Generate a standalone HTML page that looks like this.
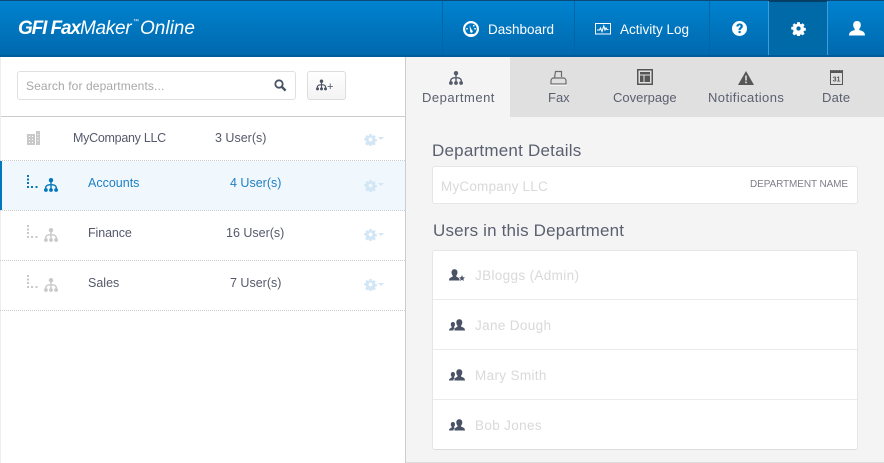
<!DOCTYPE html>
<html><head><meta charset="utf-8">
<style>
html,body{margin:0;padding:0;width:884px;height:463px;overflow:hidden;background:#fff;font-family:"Liberation Sans",sans-serif}
.a{position:absolute}
.t{position:absolute;white-space:nowrap;line-height:16px}
svg{position:absolute;display:block}
.n{font-size:13.5px;color:#d9d9d9;letter-spacing:.35px}
.tab{font-size:13px;color:#5b6070}
</style></head><body>
<svg width="0" height="0" style="position:absolute"><defs>
<symbol id="org" viewBox="0 0 14 14"><circle cx="7" cy="2.200" r="2.200"/><circle cx="1.900" cy="12" r="1.900"/><circle cx="7" cy="12" r="1.900"/><circle cx="12.100" cy="12" r="1.900"/><path d="M6.300 3h1.400v3.100c2.700 0 5.400.7 5.400 4.600h-1.400c0-2.800-1.700-3.200-4-3.200v3.200H6.300V7.500c-2.300 0-4 .4-4 3.200H.9c0-3.900 2.700-4.600 5.400-4.600z"/></symbol>
<symbol id="gear" viewBox="0 0 14 14"><path fill-rule="evenodd" d="M5.600 0h2.800l.3 2 1.200.5L11.600 1.300l2 2-1.200 1.700.5 1.200 2 .3v2.800l-2 .3-.5 1.200 1.200 1.700-2 2-1.700-1.200-1.200.5-.3 2H5.600l-.3-2-1.200-.5-1.700 1.200-2-2L1.600 9.600 1.100 8.400l-2-.3V5.300l2-.3.5-1.200L.4 3.300l2-2 1.700 1.200 1.200-.5zM7 4.700a2.300 2.300 0 1 0 0 4.600 2.300 2.300 0 0 0 0-4.600z" transform="translate(1 1) scale(.86)"/></symbol>
<symbol id="users" viewBox="0 0 16 12"><path d="M10.300.3c1.900 0 3 1.300 3 3.200 0 1.300-.6 2.400-1.200 3v1.100c1.500.7 3.900 1 3.900 3.900H5.400c0-1.900 1-2.700 2-3.200l1.100-.7V6.500c-.7-.6-1.200-1.700-1.200-3 0-1.900 1.100-3.200 3-3.200z"/><path d="M3.900 3c1.300 0 2.100 1 2.100 2.400 0 1-.4 1.800-.9 2.300v.9l.9.500C5 9.700 4.300 10.500 4.300 11.500H0c0-2 1.700-2.300 2.700-3V7.700c-.5-.5-.9-1.300-.9-2.300C1.800 4 2.600 3 3.900 3z"/></symbol>
<symbol id="dots" viewBox="0 0 11 14"><g><rect x="0" y="0" width="2" height="2"/><rect x="0" y="3.500" width="2" height="2"/><rect x="0" y="7" width="2" height="2"/><rect x="0" y="11" width="2" height="2"/><rect x="4" y="11" width="2" height="2"/><rect x="8.500" y="11" width="2" height="2"/></g></symbol>
</defs></svg>

<!-- Header -->
<div class="a" style="left:0;top:0;width:884px;height:56px;background:linear-gradient(#0083d0,#0068ad)"></div>
<div class="a" style="left:0;top:0;width:884px;height:1px;background:#0a4a78"></div>
<div class="a" style="left:0;top:55px;width:884px;height:2px;background:#005c99"></div>
<div class="a" style="left:769px;top:1px;width:58px;height:54px;background:#006aa9"></div>
<div class="a" style="left:768px;top:0;width:60px;height:2px;background:#053f66"></div>
<div class="a" style="left:442px;top:1px;width:1px;height:54px;background:#0066a6"></div>
<div class="a" style="left:574px;top:1px;width:1px;height:54px;background:#0066a6"></div>
<div class="a" style="left:709px;top:1px;width:1px;height:54px;background:#0066a6"></div>
<div class="a" style="left:768px;top:1px;width:1px;height:54px;background:#3d9cdc"></div>
<div class="a" style="left:827px;top:1px;width:1px;height:54px;background:#3d9cdc"></div>

<div class="t" style="left:18px;top:17px;font-size:19px;line-height:24px;font-style:italic;font-weight:bold;color:#fff;letter-spacing:-1.1px">GFI Fax</div>
<div class="t" style="left:80px;top:17px;font-size:19px;line-height:24px;font-style:italic;color:#fff;letter-spacing:-.3px">Maker</div>
<div class="t" style="left:133px;top:18px;font-size:6px;line-height:8px;font-style:italic;color:#fff">™</div>
<div class="t" style="left:140px;top:17px;font-size:19px;line-height:24px;font-style:italic;color:#fff">Online</div>

<!-- Dashboard icon -->
<svg style="left:463px;top:21px" width="16" height="16" viewBox="0 0 16 16"><circle cx="8" cy="8" r="8" fill="#fff"/><circle cx="8" cy="8" r="5.800" fill="#0277bf"/><path d="M2.500 8a5.500 5.500 0 0 1 11 0c0 1.800-.8 3.200-2 4.200H4.500C3.300 11.200 2.500 9.800 2.500 8z" fill="#0277bf"/><path d="M6.500 4.200l2.400 5a1.300 1.300 0 1 1-1.700.8z" fill="#fff"/><path d="M3.500 13h9l-1.500 2.500H5z" fill="#fff"/><rect x="3.200" y="7" width="1.500" height="1.500" fill="#fff"/><rect x="11.300" y="7" width="1.500" height="1.500" fill="#fff"/><rect x="10" y="4" width="1.500" height="1.500" fill="#fff"/></svg>
<div class="t" style="left:488px;top:22px;font-size:13.500px;color:#fff">Dashboard</div>
<!-- Activity icon -->
<svg style="left:595px;top:23px" width="16" height="12" viewBox="0 0 16 12"><rect x=".5" y=".5" width="15" height="10.500" fill="none" stroke="#fff"/><path d="M2 7h2.500l1-2 1.500 3.500L8.800 3l1.200 4 1-2 1 1.500h1.500" fill="none" stroke="#fff" stroke-width="1.100"/></svg>
<div class="t" style="left:620px;top:22px;font-size:13.500px;color:#fff">Activity Log</div>
<!-- Help -->
<svg style="left:732px;top:21px" width="15" height="15" viewBox="0 0 15 15"><circle cx="7.500" cy="7.500" r="7.500" fill="#fff"/><path d="M4.300 5.500C4.400 3.600 5.800 2.500 7.700 2.500c1.900 0 3.200 1.100 3.200 2.700 0 2.200-2.200 2.200-2.200 3.900H6.500c0-2.600 2-2.700 2-3.900 0-.6-.3-.9-.9-.9-.6 0-1 .5-1.100 1.200z" fill="#0277bf"/><rect x="6.500" y="10" width="2.200" height="2.100" fill="#0277bf"/></svg>
<!-- Gear -->
<svg style="left:791px;top:21px;fill:#fff" width="15" height="15"><use href="#gear"/></svg>
<!-- User -->
<svg style="left:849px;top:21px" width="16" height="15" viewBox="0 0 16 15"><path fill="#fff" d="M8 0c2.500 0 3.800 1.600 3.800 4 0 1.700-.7 3-1.500 3.700V9c2.300.9 5.700 1.300 5.700 5.500H0C0 10.300 3.400 9.900 5.700 9V7.700C4.900 7 4.200 5.700 4.200 4 4.200 1.600 5.500 0 8 0z"/></svg>

<!-- Left panel -->
<div class="a" style="left:405px;top:57px;width:1px;height:406px;background:#ccc"></div>
<div class="a" style="left:0;top:116px;width:405px;height:1px;background:#ccc"></div>
<div class="a" style="left:0;top:57px;width:1px;height:406px;background:#eee"></div>

<div class="a" style="left:17px;top:71px;width:277px;height:27px;border:1px solid #e0e0e0;border-radius:3px;background:#fff"></div>
<div class="t" style="left:26px;top:78px;font-size:12px;color:#a8a8a8;letter-spacing:.12px">Search for departments...</div>
<svg style="left:274px;top:79px" width="13" height="13" viewBox="0 0 13 13"><circle cx="5" cy="5" r="3.700" fill="none" stroke="#4a5362" stroke-width="1.800"/><path d="M7.800 7.800l3.800 3.800" stroke="#4a5362" stroke-width="2.400"/></svg>
<div class="a" style="left:307px;top:71px;width:37px;height:27px;border:1px solid #ddd;border-radius:3px;background:linear-gradient(#fff,#f3f3f3)"></div>
<svg style="left:316px;top:79px;fill:#4a5362" width="11" height="12"><use href="#org"/></svg>
<div class="t" style="left:327px;top:79px;font-size:11px;color:#4a5362">+</div>

<!-- Rows -->
<svg style="left:27px;top:131px" width="13" height="14" viewBox="0 0 13 14"><rect x="0" y="3" width="8" height="11" fill="#c9c9c9"/><rect x="9" y="0" width="4" height="14" fill="#c9c9c9"/><g fill="#fff"><rect x="2" y="5" width="1" height="1"/><rect x="5" y="5" width="1" height="1"/><rect x="2" y="8" width="1" height="1"/><rect x="5" y="8" width="1" height="1"/><rect x="2" y="11" width="1" height="1"/><rect x="5" y="11" width="1" height="1"/><rect x="10.500" y="3" width="1" height="1"/><rect x="10.500" y="6" width="1" height="1"/><rect x="10.500" y="9" width="1" height="1"/></g></svg>
<div class="t" style="left:73px;top:130px;font-size:12.500px;color:#55596a;letter-spacing:-.28px">MyCompany LLC</div>
<div class="t" style="left:215px;top:130px;font-size:12.500px;color:#55596a">3 User(s)</div>
<svg style="left:364px;top:133px;fill:#d3e6f5" width="13" height="13"><use href="#gear"/></svg>
<div class="a" style="left:378px;top:137px;border:3px solid transparent;border-top-color:#d3e6f5;border-bottom:0"></div>
<div class="a" style="left:0;top:160px;width:405px;border-top:1px dotted #ccc"></div>

<div class="a" style="left:0;top:161px;width:405px;height:49px;background:#f0f8fd"></div>
<div class="a" style="left:0;top:161px;width:2px;height:49px;background:#0277bd"></div>
<svg style="left:27px;top:175px;fill:#0277bd" width="11" height="14"><use href="#dots"/></svg>
<svg style="left:44px;top:178px;fill:#0277bd" width="14" height="14"><use href="#org"/></svg>
<div class="t" style="left:88px;top:175px;font-size:12.500px;color:#1f7fc4">Accounts</div>
<div class="t" style="left:230px;top:175px;font-size:12.500px;color:#1f7fc4">4 User(s)</div>
<svg style="left:364px;top:179px;fill:#d3e6f5" width="13" height="13"><use href="#gear"/></svg>
<div class="a" style="left:378px;top:183px;border:3px solid transparent;border-top-color:#d3e6f5;border-bottom:0"></div>
<div class="a" style="left:0;top:210px;width:405px;border-top:1px dotted #ccc"></div>

<svg style="left:27px;top:225px;fill:#c9c9c9" width="11" height="14"><use href="#dots"/></svg>
<svg style="left:44px;top:228px;fill:#c9c9c9" width="14" height="14"><use href="#org"/></svg>
<div class="t" style="left:88px;top:225px;font-size:12.500px;color:#55596a;letter-spacing:-.1px">Finance</div>
<div class="t" style="left:226px;top:225px;font-size:12.500px;color:#55596a">16 User(s)</div>
<svg style="left:364px;top:228px;fill:#d3e6f5" width="13" height="13"><use href="#gear"/></svg>
<div class="a" style="left:378px;top:233px;border:3px solid transparent;border-top-color:#d3e6f5;border-bottom:0"></div>
<div class="a" style="left:0;top:260px;width:405px;border-top:1px dotted #ccc"></div>

<svg style="left:27px;top:275px;fill:#c9c9c9" width="11" height="14"><use href="#dots"/></svg>
<svg style="left:44px;top:278px;fill:#c9c9c9" width="14" height="14"><use href="#org"/></svg>
<div class="t" style="left:88px;top:275px;font-size:12.500px;color:#55596a">Sales</div>
<div class="t" style="left:230px;top:275px;font-size:12.500px;color:#55596a">7 User(s)</div>
<svg style="left:364px;top:278px;fill:#d3e6f5" width="13" height="13"><use href="#gear"/></svg>
<div class="a" style="left:378px;top:283px;border:3px solid transparent;border-top-color:#d3e6f5;border-bottom:0"></div>
<div class="a" style="left:0;top:310px;width:405px;border-top:1px dotted #ccc"></div>

<!-- Right panel -->
<div class="a" style="left:406px;top:57px;width:478px;height:406px;background:#f4f4f4"></div>
<div class="a" style="left:510px;top:57px;width:374px;height:60px;background:#e0e0e0"></div>
<div class="a" style="left:406px;top:462px;width:478px;height:1px;background:#dcdcdc"></div>

<svg style="left:449px;top:71px;fill:#565c6b" width="14" height="14"><use href="#org"/></svg>
<div class="t tab" style="left:422px;top:90px;letter-spacing:.5px">Department</div>
<svg style="left:550px;top:70px" width="17" height="16" viewBox="0 0 17 16"><path d="M4.500 8l1-6.500h6V7" fill="none" stroke="#6b6b6b" stroke-width="1.200"/><path d="M1 14V11c0-1.800 1-3 2.500-3h10c1.500 0 2.500 1.200 2.500 3v3z" fill="none" stroke="#6b6b6b" stroke-width="1.200"/><rect x="0" y="14.500" width="17" height="1.500" fill="#f2f2f2"/></svg>
<div class="t tab" style="left:548px;top:90px">Fax</div>
<svg style="left:637px;top:69px" width="16" height="16" viewBox="0 0 16 16"><rect x=".75" y=".75" width="14.500" height="14.500" fill="none" stroke="#565656" stroke-width="1.500"/><rect x="3" y="3" width="10" height="2.500" fill="#565656"/><rect x="3" y="6.500" width="3.500" height="6.500" fill="#565656"/><rect x="7.500" y="6.500" width="5.500" height="6.500" fill="#565656"/></svg>
<div class="t tab" style="left:613px;top:90px">Coverpage</div>
<svg style="left:738px;top:71px" width="16" height="14" viewBox="0 0 16 14"><path d="M8 0l8 14H0z" fill="#565656"/><rect x="7.200" y="4.500" width="1.600" height="5" fill="#e0e0e0"/><rect x="7.200" y="10.500" width="1.600" height="1.700" fill="#e0e0e0"/></svg>
<div class="t tab" style="left:708px;top:90px;letter-spacing:.42px">Notifications</div>
<svg style="left:830px;top:69px" width="13" height="16" viewBox="0 0 13 16"><rect x=".5" y="2" width="12" height="13.500" fill="none" stroke="#565656"/><rect x="0" y="1" width="13" height="3" fill="#565656"/><path d="M1.500 1h1M4.500 1h1M7.500 1h1M10.500 1h1" stroke="#e0e0e0"/><text x="6.500" y="12.500" font-size="7" font-weight="bold" text-anchor="middle" fill="#565656" font-family="Liberation Sans">31</text></svg>
<div class="t tab" style="left:822px;top:90px;letter-spacing:.2px">Date</div>

<div class="t" style="left:432px;top:141px;font-size:17px;line-height:20px;color:#5b6070;letter-spacing:.22px">Department Details</div>
<div class="a" style="left:432px;top:166px;width:424px;height:36px;background:#fff;border:1px solid #e6e6e6;border-radius:3px"></div>
<div class="t n" style="left:441px;top:179px;letter-spacing:.2px">MyCompany LLC</div>
<div class="t" style="left:750px;top:177px;font-size:10px;color:#7e7e86;letter-spacing:-.1px">DEPARTMENT NAME</div>

<div class="t" style="left:433px;top:221px;font-size:17px;line-height:20px;color:#5b6070;letter-spacing:.17px">Users in this Department</div>
<div class="a" style="left:432px;top:250px;width:424px;height:198px;background:#fff;border:1px solid #e6e6e6;border-bottom:1px solid #ddd;border-radius:3px"></div>
<div class="a" style="left:433px;top:299px;width:424px;height:1px;background:#ebebeb"></div>
<div class="a" style="left:433px;top:349px;width:424px;height:1px;background:#ebebeb"></div>
<div class="a" style="left:433px;top:399px;width:424px;height:1px;background:#ebebeb"></div>

<svg style="left:449px;top:269px" width="16" height="12" viewBox="0 0 16 12"><path fill="#4a5266" d="M5.500.3c1.900 0 3 1.300 3 3.200 0 1.300-.6 2.400-1.200 3v1.100c1.300.6 3.300 1 3.300 3.900H0c0-2.900 2.400-3.300 3.700-3.900V6.500c-.6-.6-1.200-1.700-1.200-3 0-1.900 1.100-3.200 3-3.200z"/><path fill="#4a5266" d="M13 6l.9 2.200 2.100.2-1.600 1.400.5 2.200-1.900-1.200-1.900 1.200.5-2.200-1.600-1.400 2.100-.2z"/></svg>
<div class="t n" style="left:475px;top:268px">JBloggs (Admin)</div>
<svg style="left:449px;top:319px;fill:#4a5266" width="16" height="12"><use href="#users"/></svg>
<div class="t n" style="left:475px;top:318px">Jane Dough</div>
<svg style="left:449px;top:369px;fill:#4a5266" width="16" height="12"><use href="#users"/></svg>
<div class="t n" style="left:475px;top:368px">Mary Smith</div>
<svg style="left:449px;top:419px;fill:#4a5266" width="16" height="12"><use href="#users"/></svg>
<div class="t n" style="left:475px;top:418px">Bob Jones</div>
</body></html>
